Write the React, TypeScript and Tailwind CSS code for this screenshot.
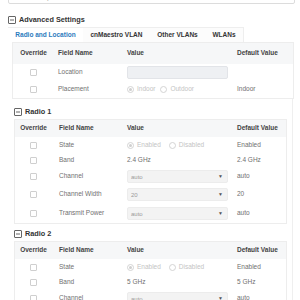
import React from 'react';

const FONT = "font-['Liberation_Sans',Arial,sans-serif]";

function MinusBox() {
  return (
    <svg width="8" height="8" viewBox="0 0 8 8" className="shrink-0">
      <rect x="0.5" y="0.5" width="7" height="7" rx="0.5" fill="none" stroke="#555" strokeWidth="0.9" />
      <line x1="2" y1="4" x2="6" y2="4" stroke="#555" strokeWidth="0.9" />
    </svg>
  );
}

function Check() {
  return <div className="w-[7px] h-[7px] border border-[#cfcfcf] rounded-[1px] bg-white" />;
}

function Radio({ label, on }: { label: string; on?: boolean }) {
  return (
    <div className="flex items-center gap-[3px] text-[#c4c4c4]">
      <div className="w-[7px] h-[7px] rounded-full border border-[#d4d4d4] flex items-center justify-center">
        {on && <div className="w-[3px] h-[3px] rounded-full bg-[#cfcfcf]" />}
      </div>
      <span>{label}</span>
    </div>
  );
}

function Select({ value }: { value: string }) {
  return (
    <div className="w-[101px] h-[13px] rounded-[2px] bg-[#f3f3f3] border border-[#ececec] flex items-center justify-between pl-[3px] pr-[4px] text-[6px] text-[#9a9a9a]">
      <span>{value}</span>
      <span className="text-[5px] text-[#555]">▼</span>
    </div>
  );
}

type Row = { name: string; value: React.ReactNode; def: string; h: string };

function Table({ rows, headH, cols, fieldPad }: { rows: Row[]; headH: string; cols: string; fieldPad: string }) {
  return (
    <div className="border border-[#ededed]">
      <div className={`grid ${cols} ${headH} items-center bg-[#f6f7f8] text-[#444] font-bold`}>
        <div className="text-center">Override</div>
        <div className={fieldPad}>Field Name</div>
        <div className="pl-[4px]">Value</div>
        <div className="pl-[4px]">Default Value</div>
      </div>
      {rows.map((r) => (
        <div key={r.name} className={`grid ${cols} ${r.h} items-center text-[#707070]`}>
          <div className="flex justify-center">
            <Check />
          </div>
          <div className={fieldPad}>{r.name}</div>
          <div className="pl-[4px]">{r.value}</div>
          <div className="pl-[4px]">{r.def}</div>
        </div>
      ))}
    </div>
  );
}

function RadioSection({ title, rows, gap }: { title: string; rows: Row[]; gap: string }) {
  return (
    <div className={gap}>
      <div className="h-[14px] flex items-center gap-[3px] text-[7.3px] font-bold text-[#333]">
        <MinusBox />
        <span>{title}</span>
      </div>
      <Table rows={rows} headH="h-[17px]" cols="grid-cols-[37px_71px_110px_1fr]" fieldPad="pl-[7px]" />
    </div>
  );
}

export default function App() {
  const tabs = [
    { label: 'Radio and Location', w: 'w-[75px]', active: true },
    { label: 'cnMaestro VLAN', w: 'w-[67px]' },
    { label: 'Other VLANs', w: 'w-[55px]' },
    { label: 'WLANs', w: 'w-[38px]' },
  ];

  const stateCell = (
    <div className="flex gap-[8px]">
      <Radio label="Enabled" on />
      <Radio label="Disabled" />
    </div>
  );

  const radioOne: Row[] = [
    { name: 'State', value: stateCell, def: 'Enabled', h: 'h-[16px]' },
    { name: 'Band', value: '2.4 GHz', def: '2.4 GHz', h: 'h-[15px]' },
    { name: 'Channel', value: <Select value="auto" />, def: 'auto', h: 'h-[17px]' },
    { name: 'Channel Width', value: <Select value="20" />, def: '20', h: 'h-[19px]' },
    { name: 'Transmit Power', value: <Select value="auto" />, def: 'auto', h: 'h-[19px]' },
  ];

  const radioTwo: Row[] = [
    { name: 'State', value: stateCell, def: 'Enabled', h: 'h-[16px]' },
    { name: 'Band', value: '5 GHz', def: '5 GHz', h: 'h-[15px]' },
    { name: 'Channel', value: <Select value="auto" />, def: 'auto', h: 'h-[17px]' },
    { name: 'Channel Width', value: <Select value="80" />, def: '80', h: 'h-[19px]' },
  ];

  return (
    <div className={`w-[300px] h-[300px] overflow-hidden bg-white ${FONT} text-[6.5px] leading-none`}>
      <div className="pl-2 pr-[5px]">
        {/* search box, mostly scrolled off */}
        <div className="-mt-[16px] h-[20px] border border-[#dcdcdc] rounded-[2px] flex items-end pl-[3px] pb-[3px] text-[7px] text-[#aaa]">
          Select an option
        </div>

        {/* Advanced Settings */}
        <div className="mt-[10px] h-[12px] flex items-center gap-[3px] text-[7.3px] font-bold text-[#333]">
          <MinusBox />
          <span>Advanced Settings</span>
        </div>

        <div className="mt-[1px] h-[15px] flex">
          <div className="flex border-t border-r border-[#eeeeee]">
            {tabs.map((t) => (
              <div
                key={t.label}
                className={`${t.w} flex items-center justify-center font-bold ${t.active ? 'bg-white text-[#2b7bbd]' : 'bg-[#fcfcfc] text-[#333]'}`}
              >
                {t.label}
              </div>
            ))}
          </div>
        </div>

        <div className="ml-[4px] mr-[1px]">
          <Table
            headH="h-[21px]"
            cols="grid-cols-[41px_69px_110px_1fr]"
            fieldPad="pl-[4px]"
            rows={[
              { name: 'Location', value: <div className="w-[101px] h-[13px] rounded-[2px] bg-[#eef0f3] border border-[#e2e4e8]" />, def: '', h: 'h-[17px]' },
              { name: 'Placement', value: <div className="flex gap-[5px]"><Radio label="Indoor" on /><Radio label="Outdoor" /></div>, def: 'Indoor', h: 'h-[17px]' },
            ]}
          />
        </div>

        {/* Radios */}
        <div className="ml-[4px] mr-[2px] border-r border-[#efefef] pl-[2px] pr-[5px] pt-[6px]">
          <RadioSection title="Radio 1" rows={radioOne} gap="" />
          <RadioSection title="Radio 2" rows={radioTwo} gap="mt-[3px]" />
        </div>
      </div>
    </div>
  );
}
